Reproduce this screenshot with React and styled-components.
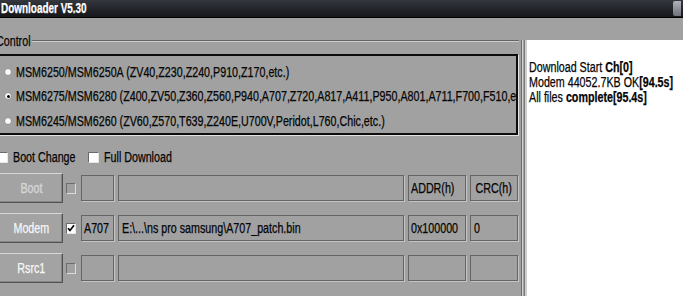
import React from 'react';
import styled, { createGlobalStyle } from 'styled-components';

const FONT = `"Liberation Sans", Arial, sans-serif`;

const GlobalStyle = createGlobalStyle`
  html, body { margin: 0; padding: 0; background: #a1a1a1; overflow: hidden; }
  #root { width: 683px; height: 296px; }
`;

const Window = styled.div`
  width: 683px;
  height: 296px;
  display: flex;
  flex-direction: column;
  overflow: hidden;
  background: #a1a1a1;
  font-family: ${FONT};
  font-size: 14px;
  color: #050505;
`;

/* condensed look of the original UI font: glyphs are drawn narrower than Arial */
const Narrow = styled.span`
  display: inline-block;
  white-space: nowrap;
  -webkit-text-stroke: 0.25px currentColor;
  transform: scaleX(${(p) => p.$sx ?? 0.765});
  transform-origin: ${(p) => (p.$center ? 'center' : 'left')} center;
`;

const TitleBar = styled.div`
  height: 17px;
  flex: none;
  display: flex;
  align-items: center;
  justify-content: space-between;
  background: linear-gradient(#34373e, #22242a 55%, #16171b);
  border-bottom: 1px solid #000;
`;

const Title = styled.span`
  color: #fff;
  font-weight: bold;
  font-size: 14px;
  line-height: 17px;
  padding-left: 1px;
`;

const CaptionButton = styled.div`
  width: 8px;
  height: 15px;
  margin-right: 2px;
  border-radius: 2px 0 0 2px;
  background: linear-gradient(#d8dbe0, #8e929a);
  opacity: 0.75;
`;

const Body = styled.div`
  flex: 1;
  display: flex;
  min-height: 0;
`;

const LeftPanel = styled.div`
  width: 523px;
  margin-left: -4px;
  flex: none;
  display: flex;
  flex-direction: column;
  padding-top: 15px;
  box-sizing: border-box;
`;

const GroupHeader = styled.div`
  height: 16px;
  display: flex;
  align-items: center;
`;

const GroupLabel = styled.span`
  width: 34px;
  flex: none;
  margin-right: 2px;
  line-height: 16px;
`;

const GroupLine = styled.div`
  flex: 1;
  height: 0;
  border-top: 1px solid #656565;
  border-bottom: 1px solid #cdcdcd;
`;

const RadioBox = styled.div`
  margin-top: 5px;
  width: 522px;
  height: 81px;
  box-sizing: border-box;
  border: 2px solid #0d0d0d;
  box-shadow: 1px 1px 0 #e2e2e2;
  padding: 4px 0 0 6px;
  overflow: hidden;
  display: flex;
  flex-direction: column;
`;

const RadioRow = styled.label`
  height: 24.5px;
  display: flex;
  align-items: center;
  gap: 4px;
  white-space: nowrap;
`;

const RadioCircle = styled.span`
  width: 8px;
  height: 8px;
  flex: none;
  box-sizing: border-box;
  border-radius: 50%;
  background: #fafafa;
  border: 1px solid #8e8e8e;
  display: flex;
  align-items: center;
  justify-content: center;
  &::after {
    content: '';
    width: 3px;
    height: 3px;
    border-radius: 50%;
    background: ${(p) => (p.$checked ? '#000' : 'transparent')};
  }
`;

const CheckRow = styled.div`
  margin-top: 15px;
  height: 14px;
  display: flex;
  align-items: center;
  gap: 12px;
  padding-left: 1px;
`;

const CheckItem = styled.label`
  display: flex;
  align-items: center;
  gap: 5px;
  white-space: nowrap;
`;

const CheckText = styled.span`
  width: ${(p) => p.$w}px;
  flex: none;
`;

const CheckBox = styled.span`
  width: 11px;
  height: 11px;
  flex: none;
  box-sizing: border-box;
  background: #fff;
  border-style: solid;
  border-width: 1px;
  border-color: #6a6a6a #e6e6e6 #e6e6e6 #6a6a6a;
`;

const Rows = styled.div`
  margin-top: 9px;
  display: flex;
  flex-direction: column;
  gap: 10px;
`;

const FileRow = styled.div`
  height: 30px;
  flex: none;
  display: flex;
  align-items: center;
  gap: 4px;
`;

const SideButton = styled.button`
  width: 67px;
  height: 30px;
  flex: none;
  box-sizing: border-box;
  padding: 0 0 0 4px;
  margin: 0;
  display: flex;
  align-items: center;
  justify-content: center;
  font-family: ${FONT};
  font-size: 14px;
  color: ${(p) => (p.$dim ? '#d4d4d4' : '#f7f7f7')};
  text-shadow: ${(p) => (p.$dim ? '0 0 1px #bcbcbc' : 'none')};
  background: #a3a3a3;
  border: 1px solid;
  border-color: #d6d6d6 #505050 #505050 #d6d6d6;
  box-shadow: inset -1px -1px 0 #868686;
`;

const RowCheck = styled.span`
  width: 10px;
  height: 11px;
  flex: none;
  margin: 0 1px 0 -1px;
  box-sizing: border-box;
  background: ${(p) => (p.$checked ? '#fff' : 'transparent')};
  border-style: solid;
  border-width: 1px;
  border-color: ${(p) =>
    p.$checked ? '#6a6a6a #e6e6e6 #e6e6e6 #6a6a6a' : '#6d6d6d #dcdcdc #dcdcdc #6d6d6d'};
  display: flex;
  align-items: center;
  justify-content: center;
`;

const Field = styled.div`
  width: ${(p) => p.$w}px;
  height: 26px;
  flex: none;
  box-sizing: border-box;
  border: 1px solid #656565;
  box-shadow: 1px 1px 0 #c4c4c4;
  display: flex;
  align-items: center;
  justify-content: ${(p) => (p.$center ? 'center' : 'flex-start')};
  padding-left: ${(p) => (p.$center ? 0 : p.$pad ?? 2)}px;
  white-space: nowrap;
  overflow: hidden;
`;

const RightColumn = styled.div`
  flex: 1;
  display: flex;
  padding-top: 22px;
  min-width: 0;
`;

const Splitter = styled.div`
  width: 8px;
  flex: none;
  background: linear-gradient(
    to right,
    #a1a1a1 0 2px,
    #6e6e6e 2px 3px,
    #d2d2d2 3px 4px,
    #a1a1a1 4px 5px,
    #7c7c7c 5px 6px,
    #cdcdcd 6px 8px
  );
`;

const LogPanel = styled.div`
  flex: 1;
  background: #fff;
  padding: 20px 0 0 2px;
  line-height: 15px;
  white-space: nowrap;
  overflow: hidden;
`;

const LogLine = styled.div`
  height: 15px;
`;

const Strong = styled.span`
  font-weight: bold;
`;

const Check = () => (
  <svg width="8" height="8" viewBox="0 0 8 8">
    <path d="M1 4.2 L3 6.4 L7 1.3" fill="none" stroke="#000" strokeWidth="1.7" />
  </svg>
);

const radios = [
  { text: 'MSM6250/MSM6250A (ZV40,Z230,Z240,P910,Z170,etc.)', checked: false },
  {
    text: 'MSM6275/MSM6280 (Z400,ZV50,Z360,Z560,P940,A707,Z720,A817,A411,P950,A801,A711,F700,F510,etc.)',
    checked: true,
  },
  { text: 'MSM6245/MSM6260 (ZV60,Z570,T639,Z240E,U700V,Peridot,L760,Chic,etc.)', checked: false },
];

const rows = [
  { name: 'Boot', dim: true, checked: false, id: '', path: '', addr: 'ADDR(h)', crc: 'CRC(h)', header: true },
  {
    name: 'Modem',
    checked: true,
    id: 'A707',
    path: 'E:\\...\\ns pro samsung\\A707_patch.bin',
    addr: '0x100000',
    crc: '0',
  },
  { name: 'Rsrc1', checked: false, id: '', path: '', addr: '', crc: '' },
];

export default function App() {
  return (
    <>
      <GlobalStyle />
      <Window>
        <TitleBar>
          <Title>
            <Narrow $sx={0.71}>Downloader V5.30</Narrow>
          </Title>
          <CaptionButton />
        </TitleBar>
        <Body>
          <LeftPanel>
            <GroupHeader>
              <GroupLabel>
                <Narrow>Control</Narrow>
              </GroupLabel>
              <GroupLine />
            </GroupHeader>
            <RadioBox>
              {radios.map((r) => (
                <RadioRow key={r.text}>
                  <RadioCircle $checked={r.checked} />
                  <Narrow>{r.text}</Narrow>
                </RadioRow>
              ))}
            </RadioBox>
            <CheckRow>
              <CheckItem>
                <CheckBox />
                <CheckText $w={63}>
                  <Narrow>Boot Change</Narrow>
                </CheckText>
              </CheckItem>
              <CheckItem>
                <CheckBox />
                <CheckText $w={70}>
                  <Narrow>Full Download</Narrow>
                </CheckText>
              </CheckItem>
            </CheckRow>
            <Rows>
              {rows.map((r) => (
                <FileRow key={r.name}>
                  <SideButton $dim={r.dim}>
                    <Narrow $center>{r.name}</Narrow>
                  </SideButton>
                  <RowCheck $checked={r.checked}>{r.checked && <Check />}</RowCheck>
                  <Field $w={33}>
                    <Narrow>{r.id}</Narrow>
                  </Field>
                  <Field $w={286} $pad={3}>
                    <Narrow>{r.path}</Narrow>
                  </Field>
                  <Field $w={58}>
                    <Narrow>{r.addr}</Narrow>
                  </Field>
                  <Field $w={48} $center={r.header} $pad={3}>
                    <Narrow $center={r.header}>{r.crc}</Narrow>
                  </Field>
                </FileRow>
              ))}
            </Rows>
          </LeftPanel>
          <RightColumn>
            <Splitter />
            <LogPanel>
              <LogLine>
                <Narrow>
                  Download Start <Strong>Ch[0]</Strong>
                </Narrow>
              </LogLine>
              <LogLine>
                <Narrow>
                  Modem 44052.7KB OK<Strong>[94.5s]</Strong>
                </Narrow>
              </LogLine>
              <LogLine>
                <Narrow>
                  All files <Strong>complete[95.4s]</Strong>
                </Narrow>
              </LogLine>
            </LogPanel>
          </RightColumn>
        </Body>
      </Window>
    </>
  );
}
